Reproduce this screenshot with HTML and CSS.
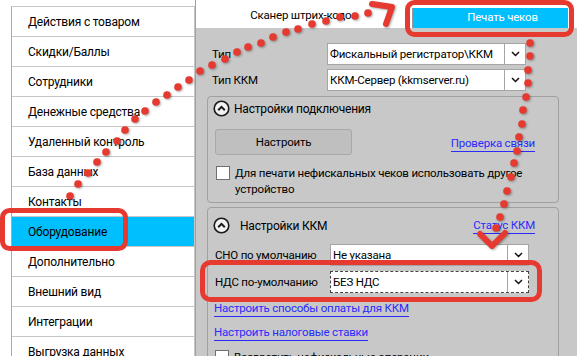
FILE: index.html
```html
<!DOCTYPE html>
<html>
<head>
    <meta charset="utf-8" />
    <title>Оборудование</title>
    <link rel="stylesheet" href="styles.css">
</head>
<body>
    <div class="app">
        <nav class="menu">
            <div class="menu-list">
                <div class="menu-item">Действия с товаром</div>
                <div class="menu-item">Скидки/Баллы</div>
                <div class="menu-item">Сотрудники</div>
                <div class="menu-item">Денежные средства</div>
                <div class="menu-item">Удаленный контроль</div>
                <div class="menu-item">База данных</div>
                <div class="menu-item">Контакты</div>
                <div class="menu-item menu-active">Оборудование</div>
                <div class="menu-item">Дополнительно</div>
                <div class="menu-item">Внешний вид</div>
                <div class="menu-item">Интеграции</div>
                <div class="menu-item">Выгрузка данных</div>
            </div>
        </nav>

        <div class="panel">
            <div class="tabs">
                <div class="tab">Сканер штрих-кодов</div>
                <div class="tab tab-active">Печать чеков</div>
            </div>

            <div class="content">
                <div class="field field-top">
                    <span>Тип</span>
                    <div class="select">
                        <span class="select-value">Фискальный регистратор\ККМ</span>
                        <span class="select-arrow"><svg width="9" height="6" viewBox="0 0 9 6"><path d="M1 1 L4.5 4.5 L8 1" fill="none" stroke="#111" stroke-width="1.5"/></svg></span>
                    </div>
                </div>
                <div class="field field-top field-next">
                    <span>Тип ККМ</span>
                    <div class="select">
                        <span class="select-value">ККМ-Сервер (kkmserver.ru)</span>
                        <span class="select-arrow"><svg width="9" height="6" viewBox="0 0 9 6"><path d="M1 1 L4.5 4.5 L8 1" fill="none" stroke="#111" stroke-width="1.5"/></svg></span>
                    </div>
                </div>

                <div class="group">
                    <div class="group-head">
                        <svg class="toggle" width="17" height="17" viewBox="0 0 17 17"><circle cx="8.5" cy="8.5" r="7.3" fill="#f2f2f2" stroke="#1a1a1a" stroke-width="1.6"/><path d="M5.2 10.2 L8.5 6.9 L11.8 10.2" fill="none" stroke="#1a1a1a" stroke-width="2"/></svg>
                        <span class="group-title">Настройки подключения</span>
                    </div>
                    <div class="group-row">
                        <div class="btn">Настроить</div>
                        <a class="link link-end">Проверка связи</a>
                    </div>
                    <div class="check">
                        <span class="check-box"></span>
                        <span class="check-text">Для печати нефискальных чеков использовать другое<br>устройство</span>
                    </div>
                </div>

                <div class="group group-kkm">
                    <div class="group-head">
                        <svg class="toggle" width="17" height="17" viewBox="0 0 17 17"><circle cx="8.5" cy="8.5" r="7.3" fill="#f2f2f2" stroke="#1a1a1a" stroke-width="1.6"/><path d="M5.2 10.2 L8.5 6.9 L11.8 10.2" fill="none" stroke="#1a1a1a" stroke-width="2"/></svg>
                        <span class="group-title">Настройки ККМ</span>
                        <a class="link link-status">Статус ККМ</a>
                    </div>
                    <div class="field field-inner field-first">
                        <span>СНО по умолчанию</span>
                        <div class="select">
                            <span class="select-value">Не указана</span>
                            <span class="select-arrow"><svg width="9" height="6" viewBox="0 0 9 6"><path d="M1 1 L4.5 4.5 L8 1" fill="none" stroke="#111" stroke-width="1.5"/></svg></span>
                        </div>
                    </div>
                    <div class="field field-inner field-second">
                        <span>НДС по-умолчанию</span>
                        <div class="select select-focus">
                            <span class="select-value">БЕЗ НДС</span>
                            <span class="select-arrow"><svg width="9" height="6" viewBox="0 0 9 6"><path d="M1 1 L4.5 4.5 L8 1" fill="none" stroke="#111" stroke-width="1.5"/></svg></span>
                        </div>
                    </div>
                    <a class="link link-line">Настроить способы оплаты для ККМ</a>
                    <a class="link link-line">Настроить налоговые ставки</a>
                    <div class="check check-last">
                        <span class="check-box"></span>
                        <span class="check-text">Возвратить нефискальные операции</span>
                    </div>
                </div>
            </div>
        </div>
    </div>

    <svg class="marks" width="577" height="356" viewBox="0 0 577 356">
        <g fill="none" stroke="#e63a30" stroke-width="5">
            <rect x="2.5" y="210.5" width="123" height="38" rx="7" />
            <rect x="407.5" y="2.5" width="164" height="32" rx="7" />
            <rect x="202.5" y="262.5" width="337" height="37" rx="8" />
        </g>
        <g class="dots" fill="#e63a30">
            <circle cx="70" cy="196" r="3.8" />
            <circle cx="78" cy="184" r="3.8" />
            <circle cx="88" cy="173" r="3.8" />
            <circle cx="97" cy="162" r="3.8" />
            <circle cx="106" cy="152" r="3.8" />
            <circle cx="117" cy="141" r="3.8" />
            <circle cx="125" cy="130" r="3.8" />
            <circle cx="135" cy="119" r="3.8" />
            <circle cx="145" cy="111" r="3.8" />
            <circle cx="156" cy="102" r="3.8" />
            <circle cx="167" cy="95" r="3.8" />
            <circle cx="178" cy="87" r="3.8" />
            <circle cx="189" cy="80" r="3.8" />
            <circle cx="200" cy="71" r="3.8" />
            <circle cx="212" cy="65" r="3.8" />
            <circle cx="225" cy="59" r="3.8" />
            <circle cx="237" cy="52" r="3.8" />
            <circle cx="248" cy="47" r="3.8" />
            <circle cx="261" cy="43" r="3.8" />
            <circle cx="273" cy="37" r="3.8" />
            <circle cx="286" cy="32" r="3.8" />
            <circle cx="298" cy="29" r="3.8" />
            <circle cx="312" cy="24" r="3.8" />
            <circle cx="326" cy="21" r="3.8" />
            <circle cx="340" cy="17" r="3.8" />
            <circle cx="355" cy="16" r="3.8" />
            <circle cx="368" cy="13" r="3.8" />

            <circle cx="530" cy="43" r="3.8" />
            <circle cx="530" cy="56" r="3.8" />
            <circle cx="528" cy="70" r="3.8" />
            <circle cx="528" cy="83" r="3.8" />
            <circle cx="526" cy="97" r="3.8" />
            <circle cx="523" cy="110" r="3.8" />
            <circle cx="522" cy="124" r="3.8" />
            <circle cx="519" cy="137" r="3.8" />
            <circle cx="517" cy="151" r="3.8" />
            <circle cx="514" cy="163" r="3.8" />
            <circle cx="511" cy="177" r="3.8" />
            <circle cx="507" cy="191" r="3.8" />
            <circle cx="504" cy="204" r="3.8" />
            <circle cx="500" cy="217" r="3.8" />
            <circle cx="496" cy="228" r="3.8" />
        </g>
        <g class="dots" fill="none" stroke="#e63a30" stroke-width="6" stroke-linecap="round" stroke-linejoin="round">
            <path d="M372 4 L392 7 L386 24" />
            <path d="M480 234 L492 246 L505 233" />
        </g>
    </svg>
</body>
</html>
```

FILE: styles.css
```css
* {
    box-sizing: border-box;
}

html, body {
    margin: 0;
}

body {
    width: 577px;
    height: 356px;
    overflow: hidden;
    position: relative;
    font-family: Roboto, "Noto Sans", sans-serif;
    font-size: 11.5px;
    letter-spacing: -0.2px;
    color: #000;
    background-color: #fff;
}

.app {
    display: flex;
    height: 356px;
}

/* left menu */
.menu {
    width: 195px;
    flex: none;
    padding: 6px 0 0 11px;
    background-color: #fff;
}

.menu-list {
    border-top: 1px solid #c6c6c6;
}

.menu-item {
    height: 30px;
    padding: 2px 0 0 16px;
    line-height: 27px;
    font-size: 12px;
    white-space: nowrap;
    border-left: 1px solid #a9a9a9;
    border-right: 1px solid #c6c6c6;
    border-bottom: 1px solid #c6c6c6;
}

.menu-active {
    background-color: #00bfff;
}

/* right panel */
.panel {
    flex: 1;
    display: flex;
    flex-direction: column;
    background-color: #c8c8c8;
    border-left: 1px solid #a0a0a0;
}

.tabs {
    display: flex;
    align-items: flex-end;
    height: 28px;
    background-color: #fff;
}

.tab {
    width: 216px;
    height: 28px;
    padding-top: 2px;
    line-height: 26px;
    text-align: center;
}

.tab-active {
    width: 156px;
    height: 20px;
    padding: 0 0 0 24px;
    line-height: 18px;
    color: #fff;
    background-color: #00bfff;
    border-left: 1px solid #9a9a9a;
}

.content {
    flex: 1;
    padding: 15px 18px 0 11px;
}

.field {
    display: grid;
    grid-template-columns: 115px 199px;
    align-items: center;
    height: 22px;
    white-space: nowrap;
}

.field-top {
    margin-left: 5px;
}

.field-inner {
    margin-left: 2px;
}

.field-next {
    margin-top: 4px;
}

.field-first {
    margin-top: 7px;
}

.field-second {
    margin-top: 5px;
}

.select {
    display: flex;
    height: 22px;
    background-color: #fff;
    border: 1px solid #a5a5a5;
}

.select-focus {
    border: 1px dashed #444;
}

.select-value {
    flex: 1;
    padding-left: 2px;
    line-height: 20px;
    white-space: nowrap;
    overflow: hidden;
}

.select-arrow {
    width: 21px;
    display: flex;
    align-items: center;
    justify-content: center;
    border-left: 1px solid #a5a5a5;
}

/* groups */
.group {
    margin-top: 5px;
    padding: 0 23px 5px 5px;
    border: 1px solid #a0a0a0;
    border-radius: 4px;
}

.group-kkm {
    margin-top: 4px;
    padding-bottom: 0;
    height: 160px;
}

.group-head {
    display: flex;
    align-items: center;
    height: 23px;
    gap: 4px;
}

.group-kkm .group-head {
    margin-top: 6px;
    gap: 10px;
}

.toggle {
    flex: none;
}

.group-title {
    font-size: 12px;
}

.group-row {
    display: flex;
    margin-top: 9px;
}

.btn {
    width: 137px;
    height: 26px;
    margin-left: 2px;
    line-height: 24px;
    text-align: center;
    background-color: #bfbfbf;
    border: 1px solid #a8a8a8;
    border-radius: 3px;
}

.link {
    color: #2a2aff;
    line-height: 15px;
    border-bottom: 1px solid #2a2aff;
    white-space: nowrap;
}

.link-end {
    margin-left: auto;
    align-self: flex-end;
    margin-bottom: 3px;
}

.link-status {
    margin-left: auto;
    margin-top: 1px;
}

.link-line {
    display: table;
    margin: 8px 0 0 1px;
}

.check {
    display: flex;
    align-items: flex-start;
    gap: 5px;
    margin: 10px 0 0 3px;
    line-height: 16px;
}

.check-text {
    white-space: nowrap;
}

.check-last {
    margin: 8px 0 0 2px;
}

.check-box {
    flex: none;
    width: 14px;
    height: 14px;
    margin-top: 1px;
    background-color: #fff;
    border: 1px solid #707070;
}

/* annotation overlay */
.marks {
    position: absolute;
    left: 0;
    top: 0;
    pointer-events: none;
}

.dots {
    filter: drop-shadow(1px 1px 1px rgba(0, 0, 0, 0.35));
}
```
